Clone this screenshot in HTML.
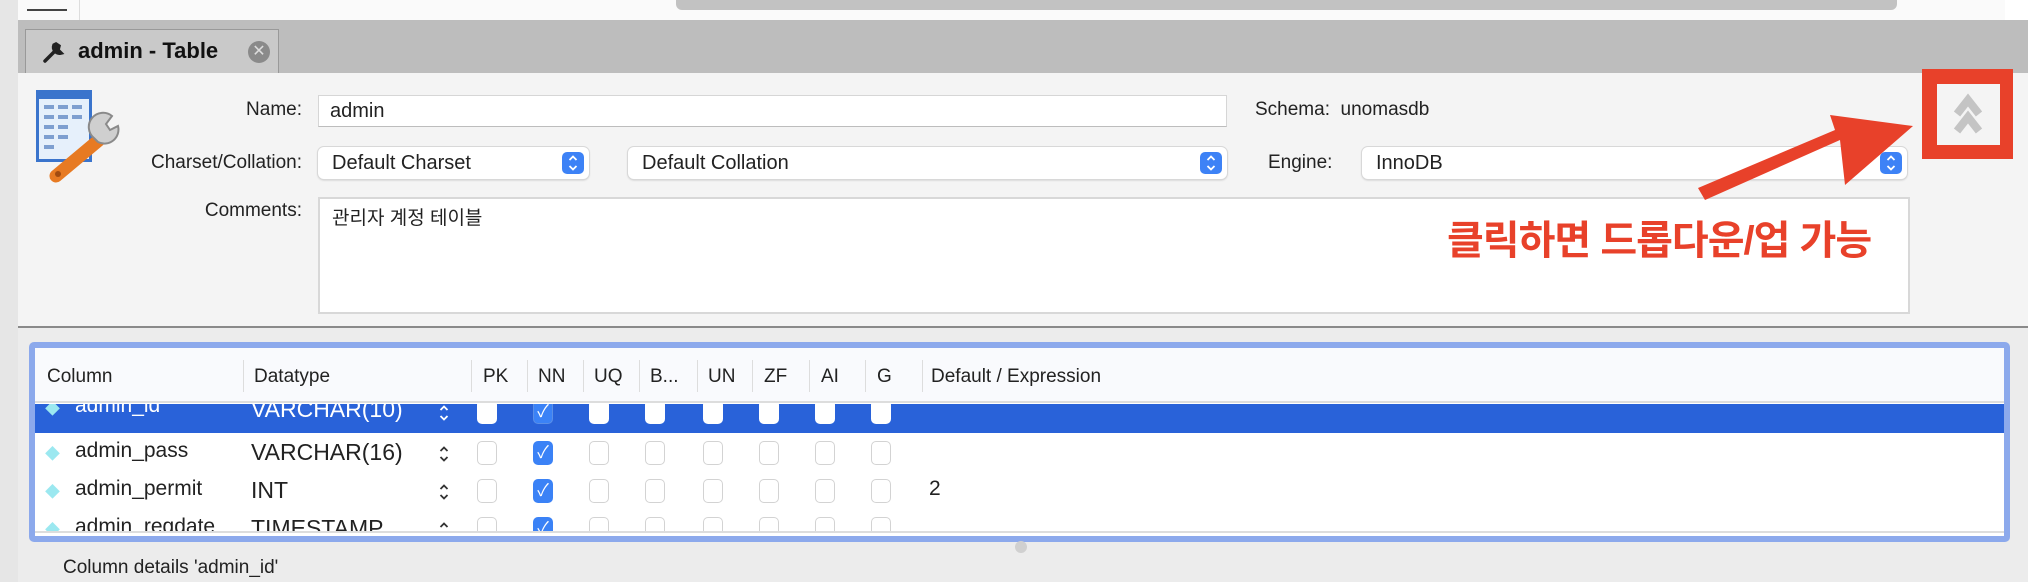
<!DOCTYPE html>
<html><head><meta charset="utf-8"><style>
*{box-sizing:border-box;margin:0;padding:0}
body{width:2028px;height:582px;overflow:hidden;background:#ececec;font-family:"Liberation Sans","Noto Sans CJK KR",sans-serif;color:#222;position:relative}
.a{position:absolute}
.lbl{font-size:19px;text-align:right;width:280px}
.inp{background:#fff;border:1px solid #d6d6d6;border-bottom-color:#bdbdbd;font-size:20px;padding:4px 11px}
.sel{background:#fff;border-radius:6px;box-shadow:0 0 0 1px #d8d8d8,0 1px 2px #bbb;font-size:20px;padding:5px 14px}
.spin{position:absolute;right:5px;top:5px;width:22px;height:22px;background:#3d82f6;border-radius:5px}
.hd{font-size:19px;top:366px}
.sep{top:360px;width:1px;height:32px;background:#ddd}
.cb{width:20px;height:24px;border:1px solid #d3d3d3;border-radius:5px;background:#fff}
.cbon{background:#3b82f6;border-color:#3b82f6;color:#fff;font-size:17px;text-align:center;line-height:22px}
.t{font-size:21px}
</style></head><body>
<svg width="0" height="0" style="position:absolute"><defs><symbol id="ud" viewBox="0 0 22 22"><path d="M7.5 8 L11 4.5 L14.5 8 M7.5 14 L11 17.5 L14.5 14" stroke="#fff" stroke-width="1.8" fill="none"/></symbol><symbol id="udk" viewBox="0 0 22 22"><path d="M7.5 8 L11 4.5 L14.5 8 M7.5 14 L11 17.5 L14.5 14" stroke="currentColor" stroke-width="1.8" fill="none"/></symbol></defs></svg>
<div class="a" style="left:0;top:0;width:2028px;height:20px;background:#fafafa"></div>
<div class="a" style="left:0;top:0;width:18px;height:582px;background:#e6e6e6"></div>
<div class="a" style="left:27px;top:9px;width:40px;height:2px;background:#444"></div>
<div class="a" style="left:79px;top:0;width:1px;height:20px;background:#ddd"></div>
<div class="a" style="left:676px;top:0;width:1221px;height:10px;background:#c2c2c2;border-radius:0 0 6px 6px"></div>
<div class="a" style="left:2005px;top:0;width:23px;height:20px;background:#fff"></div>
<div class="a" style="left:18px;top:20px;width:2010px;height:53px;background:#bdbdbd"></div>
<div class="a" style="left:25px;top:29px;width:254px;height:45px;background:#c9c9c9;border:1px solid #999;border-bottom:none"></div>
<svg class="a" style="left:42px;top:40px" width="24" height="24" viewBox="0 0 24 24"><path d="M3 21 L13 11 M12 5 a6 6 0 0 0 7 8 l-3-3 l1-4 l-3 -2z" stroke="#222" stroke-width="3.5" fill="#222" stroke-linecap="round"/></svg>
<div class="a" style="left:78px;top:38px;font-size:22px;font-weight:bold;color:#111">admin - Table</div>
<div class="a" style="left:248px;top:41px;width:22px;height:22px;border-radius:50%;background:#8a8a8a;color:#ddd;font-size:16px;text-align:center;line-height:22px">✕</div>
<div class="a" style="left:18px;top:73px;width:2010px;height:255px;background:#f4f4f4;border-bottom:2px solid #8a8a8a"></div>
<div class="a" style="left:36px;top:90px;width:56px;height:72px;background:#e6f0fb;border:3px solid #3a74cc;border-top-width:9px"></div>
<svg class="a" style="left:40px;top:103px" width="50" height="55"><g fill="#7e9fd0"><rect x="4" y="2" width="10" height="4"/><rect x="18" y="2" width="10" height="4"/><rect x="32" y="2" width="10" height="4"/><rect x="4" y="12" width="10" height="4"/><rect x="18" y="12" width="10" height="4"/><rect x="32" y="12" width="10" height="4"/><rect x="4" y="22" width="10" height="4"/><rect x="18" y="22" width="10" height="4"/><rect x="4" y="32" width="10" height="4"/><rect x="18" y="32" width="10" height="4"/><rect x="4" y="42" width="10" height="4"/></g></svg>
<svg class="a" style="left:44px;top:110px" width="90" height="75"><path d="M12 66 L55 30" stroke="#e77a22" stroke-width="13" stroke-linecap="round"/><circle cx="14" cy="64" r="3" fill="#a14b10"/><path d="M50 28 a14 14 0 0 1 18-22 l-6 8 4 6 8-4 a14 14 0 0 1-20 16z" fill="#cfcfcf" stroke="#8a8a8a" stroke-width="2"/></svg>
<div class="a lbl" style="left:22px;top:99px">Name:</div>
<div class="a inp" style="left:318px;top:95px;width:909px;height:32px">admin</div>
<div class="a" style="left:1255px;top:99px;font-size:19px">Schema:&nbsp; unomasdb</div>
<div class="a lbl" style="left:22px;top:152px">Charset/Collation:</div>
<div class="a sel" style="left:318px;top:147px;width:271px;height:32px">Default Charset<svg class="spin"><use href="#ud"/></svg></div>
<div class="a sel" style="left:628px;top:147px;width:599px;height:32px">Default Collation<svg class="spin"><use href="#ud"/></svg></div>
<div class="a" style="left:1268px;top:152px;font-size:19px">Engine:</div>
<div class="a sel" style="left:1362px;top:147px;width:545px;height:32px">InnoDB<svg class="spin"><use href="#ud"/></svg></div>
<div class="a lbl" style="left:22px;top:200px">Comments:</div>
<div class="a inp" style="left:318px;top:197px;width:1592px;height:117px;border:2px solid #d8d8d8;font-size:19px;padding:4px 12px">관리자 계정 테이블</div>
<div class="a" style="left:1922px;top:69px;width:91px;height:90px;background:#e8412a"></div>
<div class="a" style="left:1937px;top:84px;width:63px;height:61px;background:#f4f4f4"></div>
<svg class="a" style="left:1937px;top:84px" width="63" height="61"><path d="M20 30 L31 16 L42 30 M20 47 L31 33 L42 47" stroke="#c4c4c4" stroke-width="8" fill="none"/></svg>
<svg class="a" style="left:1690px;top:100px" width="240" height="110"><path d="M15 100 L150 40 L155 85 L223 26 L140 15 L145 30 L8 88 Z" fill="#e8412a"/></svg>
<div class="a" style="left:1447px;top:208px;font-size:40px;font-weight:bold;color:#e8412a;letter-spacing:-1px;white-space:nowrap">클릭하면 드롭다운/업 가능</div>
<div class="a" style="left:29px;top:342px;width:1981px;height:200px;border:6px solid #8ca9ec;border-radius:5px;background:#fff"></div>
<div class="a" style="left:35px;top:348px;width:1969px;height:55px;background:#f9fafd;border-bottom:2px solid #ddd"></div>
<div class="a hd" style="left:47px">Column</div>
<div class="a hd" style="left:254px">Datatype</div>
<div class="a hd" style="left:483px">PK</div>
<div class="a hd" style="left:538px">NN</div>
<div class="a hd" style="left:594px">UQ</div>
<div class="a hd" style="left:650px">B...</div>
<div class="a hd" style="left:708px">UN</div>
<div class="a hd" style="left:764px">ZF</div>
<div class="a hd" style="left:821px">AI</div>
<div class="a hd" style="left:877px">G</div>
<div class="a hd" style="left:931px">Default / Expression</div>
<div class="a sep" style="left:243px"></div><div class="a sep" style="left:471px"></div><div class="a sep" style="left:527px"></div><div class="a sep" style="left:583px"></div><div class="a sep" style="left:639px"></div><div class="a sep" style="left:697px"></div><div class="a sep" style="left:752px"></div><div class="a sep" style="left:809px"></div><div class="a sep" style="left:865px"></div><div class="a sep" style="left:922px"></div>
<div class="a" style="left:35px;top:404px;width:1969px;height:29px;background:#2962d9"></div>
<div class="a" style="left:35px;top:404px;width:1969px;height:129px;overflow:hidden">
 <div style="position:relative;top:-10px">
 <div class="a" style="left:10px;top:4px;font-size:15px;color:#9be8f0">◆</div>
 <div class="a t" style="left:40px;top:0;color:#fff">admin_id</div>
 <div class="a t" style="left:216px;top:2px;color:#fff;font-size:23px">VARCHAR(10)</div>
 <svg class="a" style="left:398px;top:8px;color:#fff" width="22" height="22"><use href="#udk"/></svg>
 <div class="a" style="left:442px;top:6px;width:20px;height:24px;background:#fff;border-radius:5px"></div>
 <div class="a cbon" style="left:498px;top:6px;width:20px;height:24px;border-radius:5px;border:1px solid #5a8fe8">✓</div>
 <div class="a" style="left:554px;top:6px;width:20px;height:24px;background:#fff;border-radius:5px"></div>
 <div class="a" style="left:610px;top:6px;width:20px;height:24px;background:#fff;border-radius:5px"></div>
 <div class="a" style="left:668px;top:6px;width:20px;height:24px;background:#fff;border-radius:5px"></div>
 <div class="a" style="left:724px;top:6px;width:20px;height:24px;background:#fff;border-radius:5px"></div>
 <div class="a" style="left:780px;top:6px;width:20px;height:24px;background:#fff;border-radius:5px"></div>
 <div class="a" style="left:836px;top:6px;width:20px;height:24px;background:#fff;border-radius:5px"></div>
 </div>
</div>
<div class="a" style="left:35px;top:433px;width:1969px;height:100px;overflow:hidden">
 <div class="a" style="left:10px;top:10px;font-size:15px;color:#9be8f0">◆</div>
 <div class="a t" style="left:40px;top:6px">admin_pass</div>
 <div class="a t" style="left:216px;top:6px;font-size:23px">VARCHAR(16)</div>
 <svg class="a" style="left:398px;top:10px;color:#333" width="22" height="22"><use href="#udk"/></svg>
 <div class="a cb" style="left:442px;top:8px"></div><div class="a cb cbon" style="left:498px;top:8px">✓</div><div class="a cb" style="left:554px;top:8px"></div><div class="a cb" style="left:610px;top:8px"></div><div class="a cb" style="left:668px;top:8px"></div><div class="a cb" style="left:724px;top:8px"></div><div class="a cb" style="left:780px;top:8px"></div><div class="a cb" style="left:836px;top:8px"></div>
 <div class="a" style="left:10px;top:48px;font-size:15px;color:#9be8f0">◆</div>
 <div class="a t" style="left:40px;top:44px">admin_permit</div>
 <div class="a t" style="left:216px;top:44px;font-size:23px">INT</div>
 <svg class="a" style="left:398px;top:48px;color:#333" width="22" height="22"><use href="#udk"/></svg>
 <div class="a cb" style="left:442px;top:46px"></div><div class="a cb cbon" style="left:498px;top:46px">✓</div><div class="a cb" style="left:554px;top:46px"></div><div class="a cb" style="left:610px;top:46px"></div><div class="a cb" style="left:668px;top:46px"></div><div class="a cb" style="left:724px;top:46px"></div><div class="a cb" style="left:780px;top:46px"></div><div class="a cb" style="left:836px;top:46px"></div>
 <div class="a t" style="left:894px;top:44px">2</div>
 <div class="a" style="left:10px;top:86px;font-size:15px;color:#9be8f0">◆</div>
 <div class="a t" style="left:40px;top:82px">admin_regdate</div>
 <div class="a t" style="left:216px;top:82px;font-size:23px">TIMESTAMP</div>
 <svg class="a" style="left:398px;top:86px;color:#333" width="22" height="22"><use href="#udk"/></svg>
 <div class="a cb" style="left:442px;top:84px"></div><div class="a cb cbon" style="left:498px;top:84px">✓</div><div class="a cb" style="left:554px;top:84px"></div><div class="a cb" style="left:610px;top:84px"></div><div class="a cb" style="left:668px;top:84px"></div><div class="a cb" style="left:724px;top:84px"></div><div class="a cb" style="left:780px;top:84px"></div><div class="a cb" style="left:836px;top:84px"></div>
</div>
<div class="a" style="left:35px;top:531px;width:1969px;height:2px;background:#ddd"></div>
<div class="a" style="left:1015px;top:541px;width:12px;height:12px;border-radius:50%;background:#d0d0d0"></div>
<div class="a" style="left:63px;top:557px;font-size:19px">Column details 'admin_id'</div>
</body></html>
